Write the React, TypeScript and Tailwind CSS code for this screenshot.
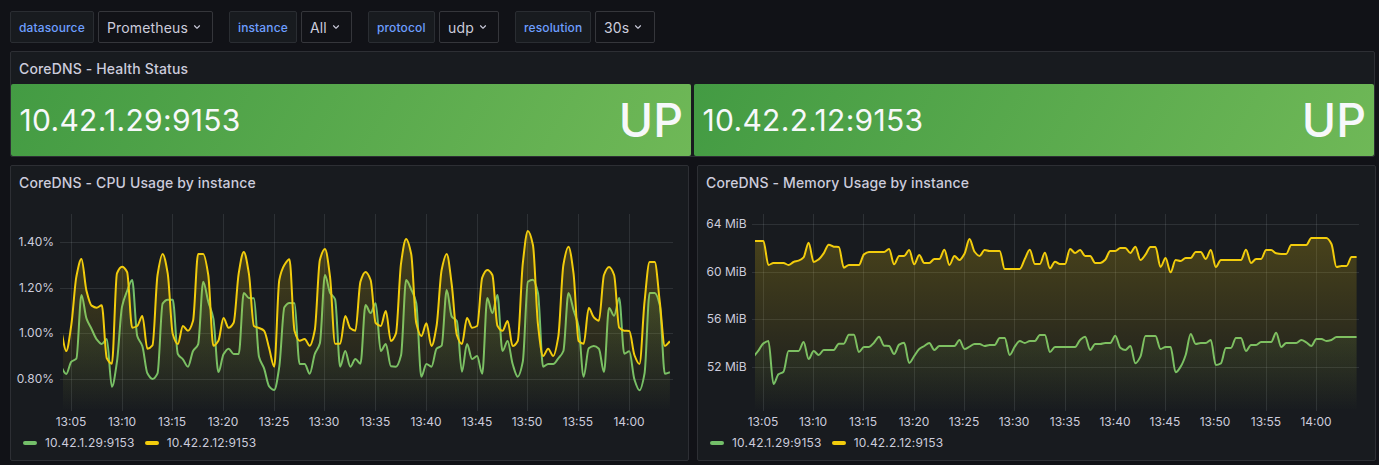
import React from "react";

const GREEN = "#73bf69";
const YELLOW = "#f2cc0c";

type Tick = { pos: number; label: string };

type ChartSpec = {
  id: string;
  left: number;
  plotLeft: number;
  plotRight: number;
  gridLeft: number;
  gridRight: number;
  firstX: number;
  step: number;
  yLabelX: number;
  yTicks: Tick[];
  green: number[];
  yellow: number[];
};

const TIMES = ["13:05", "13:10", "13:15", "13:20", "13:25", "13:30", "13:35", "13:40", "13:45", "13:50", "13:55", "14:00"];
const PLOT_TOP = 214;
const PLOT_BOTTOM = 411;

// One sample every 30 seconds; values are thirds of a pixel below y = 210.
const cpuGreen = [
  470, 492, 455, 446, 255, 326, 357, 388, 402, 387, 530, 455, 290, 243, 210, 378, 408, 490, 507, 490, 281, 269, 269, 432, 448,
  470, 423, 403, 215, 275, 325, 486, 433, 416, 432, 432, 249, 264, 265, 440, 475, 529, 540, 470, 292, 279, 280, 462, 462, 491,
  432, 400, 195, 248, 268, 470, 423, 470, 447, 461, 285, 309, 280, 423, 402, 469, 470, 436, 210, 238, 280, 500, 462, 470, 416,
  407, 240, 320, 333, 485, 402, 447, 438, 491, 264, 309, 255, 423, 393, 462, 500, 455, 215, 209, 250, 470, 462, 462, 445, 423,
  249, 300, 350, 500, 415, 408, 416, 486, 294, 317, 264, 431, 424, 508, 541, 490, 249, 249, 285, 491, 487,
];
const cpuYellow = [
  360, 423, 345, 200, 147, 243, 287, 293, 286, 445, 461, 190, 170, 186, 353, 348, 318, 416, 406, 195, 132, 190, 372, 402, 348,
  362, 332, 132, 132, 195, 407, 392, 324, 353, 338, 190, 126, 190, 348, 354, 362, 415, 470, 210, 165, 148, 362, 392, 387, 407,
  360, 150, 117, 200, 401, 401, 318, 355, 362, 215, 186, 210, 339, 348, 303, 393, 370, 160, 87, 132, 339, 378, 340, 408, 348,
  180, 132, 225, 375, 402, 324, 353, 348, 203, 180, 195, 347, 362, 333, 408, 393, 160, 63, 105, 345, 438, 416, 438, 380, 165,
  110, 190, 393, 401, 294, 322, 332, 195, 171, 195, 353, 362, 363, 435, 462, 275, 156, 156, 275, 408, 394,
];
const memGreen = [
  440, 422, 400, 393, 522, 493, 485, 423, 423, 423, 396, 447, 423, 435, 420, 420, 420, 401, 401, 374, 374, 426, 411, 411, 398,
  380, 407, 408, 432, 404, 398, 459, 438, 417, 408, 399, 420, 408, 408, 408, 408, 390, 417, 410, 402, 402, 408, 405, 405, 384,
  384, 435, 410, 393, 399, 393, 393, 375, 375, 426, 411, 411, 411, 411, 411, 390, 380, 420, 402, 402, 399, 399, 377, 413, 420,
  408, 460, 440, 378, 378, 378, 417, 411, 411, 487, 470, 435, 372, 402, 399, 399, 390, 465, 460, 414, 414, 384, 384, 423, 405,
  405, 396, 396, 396, 368, 411, 399, 399, 399, 390, 397, 408, 387, 387, 393, 390, 381, 381, 381, 381, 381,
];
const memYellow = [
  98, 98, 98, 165, 159, 159, 159, 165, 156, 152, 142, 98, 156, 148, 130, 104, 110, 111, 173, 165, 165, 165, 133, 126, 126, 126,
  126, 117, 163, 138, 138, 120, 163, 135, 159, 159, 147, 147, 119, 165, 138, 150, 131, 87, 125, 138, 120, 123, 123, 123, 177,
  177, 177, 177, 147, 119, 162, 162, 128, 175, 155, 162, 162, 117, 129, 120, 138, 138, 159, 159, 149, 123, 123, 114, 114, 129,
  110, 150, 134, 111, 111, 171, 144, 187, 150, 153, 144, 144, 126, 126, 147, 120, 171, 150, 150, 150, 150, 150, 119, 159, 147,
  147, 120, 120, 130, 132, 132, 105, 105, 105, 105, 84, 84, 84, 84, 102, 171, 168, 168, 141, 141,
].map((v, i) => (i < 3 ? v - 5 : v));

const cpuChart: ChartSpec = {
  id: "cpu",
  left: 11,
  plotLeft: 63,
  plotRight: 670,
  gridLeft: 60,
  gridRight: 673,
  firstX: 71.3,
  step: 5.073,
  yLabelX: 54,
  yTicks: [
    { pos: 242, label: "1.40%" },
    { pos: 288, label: "1.20%" },
    { pos: 333, label: "1.00%" },
    { pos: 379, label: "0.80%" },
  ],
  green: cpuGreen,
  yellow: cpuYellow,
};

const memChart: ChartSpec = {
  id: "mem",
  left: 698,
  plotLeft: 755,
  plotRight: 1357,
  gridLeft: 752,
  gridRight: 1359,
  firstX: 763.4,
  step: 5.027,
  yLabelX: 746.5,
  yTicks: [
    { pos: 224, label: "64 MiB" },
    { pos: 272, label: "60 MiB" },
    { pos: 319, label: "56 MiB" },
    { pos: 367, label: "52 MiB" },
  ],
  green: memGreen,
  yellow: memYellow,
};

// Monotone cubic interpolation through evenly spaced samples.
function smoothPath(values: number[], firstX: number, step: number) {
  const ys = values.map((v) => 210 + v / 3);
  const xs = values.map((_, i) => firstX + (i - 2) * step);
  const d = ys.slice(1).map((y, i) => (y - ys[i]) / step);
  const m = ys.map((_, i) => {
    if (i === 0) return d[0];
    if (i === ys.length - 1) return d[i - 1];
    return d[i - 1] * d[i] <= 0 ? 0 : (2 * d[i - 1] * d[i]) / (d[i - 1] + d[i]);
  });
  let path = `M${xs[0]},${ys[0]}`;
  for (let i = 1; i < ys.length; i++) {
    const h = step / 3;
    path += `C${(xs[i - 1] + h).toFixed(2)},${(ys[i - 1] + m[i - 1] * h).toFixed(2)} ${(xs[i] - h).toFixed(2)},${(ys[i] - m[i] * h).toFixed(2)} ${xs[i].toFixed(2)},${ys[i].toFixed(2)}`;
  }
  return { line: path, area: `${path}L${xs[xs.length - 1]},${PLOT_BOTTOM}L${xs[0]},${PLOT_BOTTOM}Z` };
}

function Chart({ spec }: { spec: ChartSpec }) {
  const series = [
    { name: "green", color: GREEN, ...smoothPath(spec.green, spec.firstX, spec.step) },
    { name: "yellow", color: YELLOW, ...smoothPath(spec.yellow, spec.firstX, spec.step) },
  ];
  return (
    <svg width={677} height={232} viewBox={`${spec.left} 200 677 232`} className="block shrink-0">
      <defs>
        {series.map((s) => (
          <linearGradient key={s.name} id={`${spec.id}-${s.name}`} gradientUnits="userSpaceOnUse" x1="0" x2="0" y1={PLOT_TOP} y2={PLOT_BOTTOM}>
            <stop offset="0" stopColor={s.color} stopOpacity="0.25" />
            <stop offset="1" stopColor={s.color} stopOpacity="0" />
          </linearGradient>
        ))}
        <clipPath id={`${spec.id}-clip`}>
          <rect x={spec.plotLeft} y={PLOT_TOP} width={spec.plotRight - spec.plotLeft} height={PLOT_BOTTOM - PLOT_TOP} />
        </clipPath>
      </defs>
      <g fill="#f0faff" fillOpacity="0.1">
        {TIMES.map((t, i) => (
          <rect key={t} x={Math.floor(spec.firstX + i * 10 * spec.step)} y={PLOT_TOP} width="1" height={PLOT_BOTTOM - PLOT_TOP} />
        ))}
        {spec.yTicks.map((t) => (
          <rect key={t.label} x={spec.gridLeft} y={t.pos} width={spec.gridRight - spec.gridLeft} height="1" />
        ))}
      </g>
      <g clipPath={`url(#${spec.id}-clip)`}>
        {series.map((s) => (
          <g key={s.name}>
            <path d={s.area} fill={`url(#${spec.id}-${s.name})`} />
            <path d={s.line} fill="none" stroke={s.color} strokeWidth="2" strokeLinejoin="round" />
          </g>
        ))}
      </g>
      <g className="text-[12px]" fill="#ccccdc">
        {spec.yTicks.map((t) => (
          <text key={t.label} x={spec.yLabelX} y={t.pos + 4} textAnchor="end">
            {t.label}
          </text>
        ))}
        {TIMES.map((t, i) => (
          <text key={t} x={Math.floor(spec.firstX + i * 10 * spec.step)} y="426" textAnchor="middle">
            {t}
          </text>
        ))}
      </g>
    </svg>
  );
}

function ChartPanel({ title, spec }: { title: string; spec: ChartSpec }) {
  return (
    <section className="flex h-[296px] w-[679px] flex-col rounded-[2px] border border-[#2d2f34] bg-[#181b1f]">
      <h2 className="h-[34px] shrink-0 px-2 text-[14px] leading-[34px] font-medium tracking-[0.13px]">{title}</h2>
      <Chart spec={spec} />
      <div className="flex h-[22px] items-center gap-[10px] pl-3 text-[12px] tracking-[0.2px]">
        <div className="flex items-center gap-2">
          <span className="h-1 w-[14px] rounded-full bg-[#73bf69]" />
          10.42.1.29:9153
        </div>
        <div className="flex items-center gap-2">
          <span className="h-1 w-[14px] rounded-full bg-[#f2cc0c]" />
          10.42.2.12:9153
        </div>
      </div>
    </section>
  );
}

function Variable({ label, value, labelWidth, valueWidth }: { label: string; value: string; labelWidth: string; valueWidth: string }) {
  return (
    <div className="flex gap-1">
      <div className={`${labelWidth} h-8 rounded-[2px] border border-[#2a2d32] bg-[#181b1f] pl-2 text-[12px] leading-[31px] font-medium tracking-[0.13px] whitespace-nowrap text-[#6e9fff]`}>
        {label}
      </div>
      <div className={`${valueWidth} flex h-8 items-center gap-0.5 rounded-[2px] border border-[#35363b] bg-[#111217] pl-2 text-[14px] tracking-[0.15px] whitespace-nowrap`}>
        {value}
        <svg width="14" height="14" viewBox="0 0 24 24" fill="currentColor" className="shrink-0">
          <path d="M17,9.17a1,1,0,0,0-1.41,0L12,12.71,8.46,9.17a1,1,0,0,0-1.41,0,1,1,0,0,0,0,1.42l4.24,4.24a1,1,0,0,0,1.42,0L17,10.59A1,1,0,0,0,17,9.17Z" />
        </svg>
      </div>
    </div>
  );
}

function Stat({ name }: { name: string }) {
  return (
    <div className="flex h-[72px] w-[680px] items-center justify-between rounded-[2px] bg-[linear-gradient(120deg,#439b43,#6fb857)] pr-2 pl-[8.5px] text-[#f7f8fa]">
      <span className="text-[30px] leading-[72px] tracking-[0.3px]">{name}</span>
      <span className="text-[46.5px] leading-[72px] font-medium">UP</span>
    </div>
  );
}

export default function App() {
  return (
    <main className="h-[465px] w-[1379px] overflow-hidden bg-[#111217] pt-[11px] pl-[10px] font-['Inter',sans-serif] text-[#ccccdc]">
      <div className="flex gap-4">
        <Variable label="datasource" value="Prometheus" labelWidth="w-[84px]" valueWidth="w-[115px]" />
        <Variable label="instance" value="All" labelWidth="w-[68px]" valueWidth="w-[51px]" />
        <Variable label="protocol" value="udp" labelWidth="w-[67px]" valueWidth="w-[60px]" />
        <Variable label="resolution" value="30s" labelWidth="w-[76px]" valueWidth="w-[60px]" />
      </div>
      <section className="mt-2 h-[106px] w-[1365px] rounded-[2px] border border-[#2d2f34] bg-[#181b1f]">
        <h2 className="h-8 px-2 text-[14px] leading-[34px] font-medium tracking-[0.15px]">CoreDNS - Health Status</h2>
        <div className="flex gap-[3px]">
          <Stat name="10.42.1.29:9153" />
          <Stat name="10.42.2.12:9153" />
        </div>
      </section>
      <div className="mt-2 flex gap-2">
        <ChartPanel title="CoreDNS - CPU Usage by instance" spec={cpuChart} />
        <ChartPanel title="CoreDNS - Memory Usage by instance" spec={memChart} />
      </div>
    </main>
  );
}
